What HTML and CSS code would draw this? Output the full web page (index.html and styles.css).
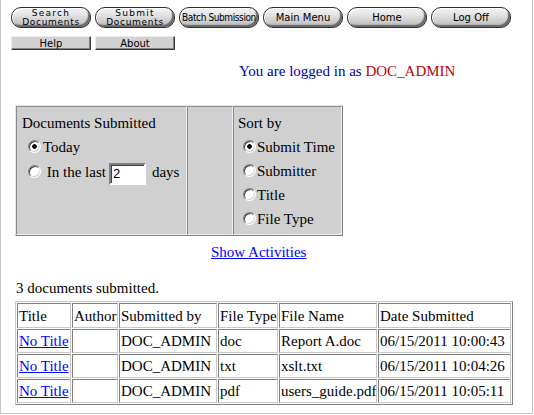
FILE: index.html
```html
<!DOCTYPE html>
<html lang="en">
<head>
<meta charset="utf-8">
<title>Documents Submitted</title>
<link rel="stylesheet" href="styles.css">
</head>
<body>
<div class="frame">
  <nav class="nav-main">
    <button class="pill two" type="button"><span class="l1">Search</span><span class="l2">Documents</span></button>
    <button class="pill two" type="button"><span class="l1">Submit</span><span class="l2">Documents</span></button>
    <button class="pill narrow" type="button">Batch Submission</button>
    <button class="pill" type="button">Main Menu</button>
    <button class="pill" type="button">Home</button>
    <button class="pill" type="button">Log Off</button>
  </nav>
  <nav class="nav-sub">
    <button class="bar" type="button">Help</button>
    <button class="bar" type="button">About</button>
  </nav>
  <p class="login">You are logged in as <span class="user">DOC_ADMIN</span></p>
  <form class="filter">
    <div class="cell when">
      <div class="row">Documents Submitted</div>
      <label class="row"><input class="radio" type="radio" name="when" checked>Today</label>
      <label class="row tall"><input class="radio" type="radio" name="when"> In the last<input class="days" type="text" value="2">days</label>
    </div>
    <div class="cell spacer"></div>
    <div class="cell sort">
      <div class="row">Sort by</div>
      <label class="row"><input class="radio" type="radio" name="sort" checked>Submit Time</label>
      <label class="row"><input class="radio" type="radio" name="sort">Submitter</label>
      <label class="row"><input class="radio" type="radio" name="sort">Title</label>
      <label class="row"><input class="radio" type="radio" name="sort">File Type</label>
    </div>
  </form>
  <p class="activities"><a href="#">Show Activities</a></p>
  <p class="count">3 documents submitted.</p>
  <table class="docs">
    <colgroup>
      <col class="c-title"><col class="c-author"><col class="c-by"><col class="c-type"><col class="c-name"><col class="c-date">
    </colgroup>
    <thead>
      <tr class="head"><th>Title</th><th>Author</th><th>Submitted by</th><th>File Type</th><th>File Name</th><th>Date Submitted</th></tr>
    </thead>
    <tbody>
      <tr class="r1"><td><a href="#">No Title</a></td><td></td><td>DOC_ADMIN</td><td>doc</td><td>Report A.doc</td><td>06/15/2011 10:00:43</td></tr>
      <tr class="r2"><td><a href="#">No Title</a></td><td></td><td>DOC_ADMIN</td><td>txt</td><td>xslt.txt</td><td>06/15/2011 10:04:26</td></tr>
      <tr class="r3"><td><a href="#">No Title</a></td><td></td><td>DOC_ADMIN</td><td>pdf</td><td>users_guide.pdf</td><td>06/15/2011 10:05:11</td></tr>
    </tbody>
  </table>
</div>
</body>
</html>
```

FILE: styles.css
```css
html, body {
  margin: 0;
  padding: 0;
  background: #fff;
}

.frame {
  box-sizing: border-box;
  width: 533px;
  height: 414px;
  border: 1px solid #c4c4c4;
  border-top: 0;
  padding: 7px 0 0 10px;
  font-family: "Liberation Serif", "Times New Roman", serif;
  font-size: 15px;
  color: #000;
}

/* top navigation pills */
.nav-main {
  display: flex;
  gap: 4px;
}

.pill {
  box-sizing: border-box;
  width: 80px;
  height: 21px;
  margin: 0;
  padding: 0;
  border: 1px solid #2e2e2e;
  border-radius: 10px;
  background: linear-gradient(to bottom, #f4f4f4 0%, #e4e4e4 35%, #cacaca 75%, #b0b0b0 100%);
  box-shadow: inset 1px 1px 0 #ffffff, inset -2px -2px 1px #6a6a6a;
  font-family: "DejaVu Sans", Verdana, sans-serif;
  font-size: 10px;
  line-height: 18px;
  color: #000;
  display: flex;
  flex-direction: column;
  align-items: center;
  justify-content: center;
}

.pill.two span {
  display: block;
  height: 9px;
  line-height: 9px;
  font-size: 9px;
}

.pill.two .l1 {
  letter-spacing: 1.3px;
}

.pill.two .l2 {
  letter-spacing: 0.7px;
}

.pill.narrow {
  font-family: "DejaVu Sans Condensed", "DejaVu Sans", sans-serif;
  font-size: 10px;
  letter-spacing: -0.4px;
}

.nav-sub {
  display: flex;
  gap: 4px;
  margin-top: 8px;
}

.bar {
  box-sizing: border-box;
  width: 80px;
  height: 14px;
  margin: 0;
  padding: 0;
  border: 1px solid;
  border-color: #ececec #3c3c3c #3c3c3c #ececec;
  background: #d2d2d2;
  box-shadow: inset -1px -1px 0 #808080;
  font-family: "DejaVu Sans", Verdana, sans-serif;
  font-size: 10px;
  line-height: 11px;
  color: #000;
}

/* login line */
.login {
  margin: 12px 0 0;
  padding-left: 228px;
  line-height: 18px;
  color: #0000a0;
}

.user {
  color: #c00000;
}

/* filter box */
.filter {
  display: flex;
  box-sizing: border-box;
  width: 328px;
  height: 131px;
  margin: 25px 0 0 4px;
  border: 1px solid;
  border-color: #e6e6e6 #808080 #808080 #e6e6e6;
  background: #d0d0d0;
}

.cell {
  box-sizing: border-box;
  border: 1px solid;
  border-color: #8a8a8a #eeeeee #eeeeee #8a8a8a;
}

.when {
  width: 171px;
  padding: 4px 5px 0;
}

.spacer {
  width: 46px;
}

.sort {
  width: 109px;
  padding: 4px 4px 0;
}

.row {
  display: block;
  height: 24px;
  line-height: 24px;
  white-space: nowrap;
}

.row.tall {
  height: 26px;
  line-height: 26px;
}

.radio {
  appearance: none;
  -webkit-appearance: none;
  box-sizing: border-box;
  display: inline-block;
  width: 13px;
  height: 13px;
  margin: 0 2px 0 6px;
  vertical-align: -1px;
  border-radius: 50%;
  border: 1px solid;
  border-color: #808080 #ffffff #ffffff #808080;
  box-shadow: inset 1px 1px 0 #404040, inset -1px -1px 0 #d4d0c8;
  background: #fff;
}

.radio:checked {
  background: radial-gradient(circle, #000 0, #000 2px, #fff 2.6px);
}

.sort .radio {
  margin: 0 1px 0 5px;
}

.days {
  box-sizing: border-box;
  width: 37px;
  height: 22px;
  margin: 0 6px 0 3px;
  padding: 0 2px;
  vertical-align: middle;
  border: 2px solid;
  border-color: #808080 #ffffff #ffffff #808080;
  box-shadow: inset 1px 1px 0 #404040;
  background: #fff;
  font-family: "Liberation Sans", Arial, sans-serif;
  font-size: 13px;
  color: #000;
}

/* below the box */
.activities {
  margin: 7px 0 0;
  padding-left: 200px;
  line-height: 18px;
}

a {
  color: #0000ff;
}

.count {
  margin: 18px 0 0;
  padding-left: 5px;
  line-height: 18px;
}

/* documents table */
.docs {
  margin: 4px 0 0 4px;
  width: 498px;
  table-layout: fixed;
  border-collapse: separate;
  border-spacing: 1px;
  border: 1px solid;
  border-color: #c8c8c8 #808080 #808080 #c8c8c8;
  font-size: 15px;
}

.c-title { width: 54px; }
.c-author { width: 46px; }
.c-by { width: 98px; }
.c-type { width: 60px; }
.c-name { width: 98px; }
.c-date { width: 133px; }

.docs th,
.docs td {
  box-sizing: border-box;
  height: 24px;
  padding: 0 1px;
  border: 1px solid;
  border-color: #808080 #c8c8c8 #c8c8c8 #808080;
  font-weight: normal;
  text-align: left;
  white-space: nowrap;
  overflow: hidden;
  line-height: 20px;
}

.docs .head th {
  height: 25px;
}
```
